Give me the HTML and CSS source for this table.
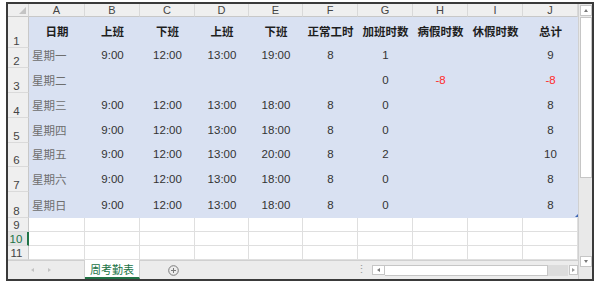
FILE: index.html
```html
<!DOCTYPE html>
<html lang="zh">
<head>
<meta charset="utf-8">
<link rel="stylesheet" href="styles.css">
</head>
<body>
<div class="window">
  <div class="left">
    <div class="sheet">
      <div class="corner"><span class="tri"></span></div>
      <div class="ch">A</div><div class="ch">B</div><div class="ch">C</div><div class="ch">D</div><div class="ch">E</div><div class="ch">F</div><div class="ch">G</div><div class="ch">H</div><div class="ch">I</div><div class="ch">J</div>

      <div class="rh">1</div>
      <div class="c hd">日期</div><div class="c hd">上班</div><div class="c hd">下班</div><div class="c hd">上班</div><div class="c hd">下班</div><div class="c hd">正常工时</div><div class="c hd">加班时数</div><div class="c hd">病假时数</div><div class="c hd">休假时数</div><div class="c hd">总计</div>

      <div class="rh">2</div>
      <div class="c day">星期一</div><div class="c">9:00</div><div class="c">12:00</div><div class="c">13:00</div><div class="c">19:00</div><div class="c">8</div><div class="c">1</div><div class="c"></div><div class="c"></div><div class="c">9</div>

      <div class="rh">3</div>
      <div class="c day">星期二</div><div class="c"></div><div class="c"></div><div class="c"></div><div class="c"></div><div class="c"></div><div class="c">0</div><div class="c red">-8</div><div class="c"></div><div class="c red">-8</div>

      <div class="rh">4</div>
      <div class="c day">星期三</div><div class="c">9:00</div><div class="c">12:00</div><div class="c">13:00</div><div class="c">18:00</div><div class="c">8</div><div class="c">0</div><div class="c"></div><div class="c"></div><div class="c">8</div>

      <div class="rh">5</div>
      <div class="c day">星期四</div><div class="c">9:00</div><div class="c">12:00</div><div class="c">13:00</div><div class="c">18:00</div><div class="c">8</div><div class="c">0</div><div class="c"></div><div class="c"></div><div class="c">8</div>

      <div class="rh">6</div>
      <div class="c day">星期五</div><div class="c">9:00</div><div class="c">12:00</div><div class="c">13:00</div><div class="c">20:00</div><div class="c">8</div><div class="c">2</div><div class="c"></div><div class="c"></div><div class="c">10</div>

      <div class="rh">7</div>
      <div class="c day">星期六</div><div class="c">9:00</div><div class="c">12:00</div><div class="c">13:00</div><div class="c">18:00</div><div class="c">8</div><div class="c">0</div><div class="c"></div><div class="c"></div><div class="c">8</div>

      <div class="rh">8</div>
      <div class="c day">星期日</div><div class="c">9:00</div><div class="c">12:00</div><div class="c">13:00</div><div class="c">18:00</div><div class="c">8</div><div class="c">0</div><div class="c"></div><div class="c"></div><div class="c last">8<span class="handle"></span></div>

      <div class="rh">9</div>
      <div class="w"></div><div class="w"></div><div class="w"></div><div class="w"></div><div class="w"></div><div class="w"></div><div class="w"></div><div class="w"></div><div class="w"></div><div class="w"></div>

      <div class="rh active">10</div>
      <div class="w"></div><div class="w"></div><div class="w"></div><div class="w"></div><div class="w"></div><div class="w"></div><div class="w"></div><div class="w"></div><div class="w"></div><div class="w"></div>

      <div class="rh">11</div>
      <div class="w"></div><div class="w"></div><div class="w"></div><div class="w"></div><div class="w"></div><div class="w"></div><div class="w"></div><div class="w"></div><div class="w"></div><div class="w"></div>
    </div>
    <div class="tabbar">
      <div class="nav"><span class="navl"></span><span class="navr"></span></div>
      <div class="tab">周考勤表</div>
      <div class="addwrap">
        <svg class="add" width="11" height="11" viewBox="0 0 11 11"><circle cx="5.5" cy="5.5" r="4.8" fill="none" stroke="#7a7a7a" stroke-width="1"/><path d="M5.5 3v5M3 5.5h5" stroke="#7a7a7a" stroke-width="1"/></svg>
      </div>
      <div class="spacer"></div>
      <div class="dots">⋮</div>
      <div class="hscroll">
        <div class="hbtn hl"><span class="al"></span></div>
        <div class="htrack"></div>
        <div class="hgap"></div>
        <div class="hbtn hr"><span class="ar"></span></div>
      </div>
    </div>
  </div>
  <div class="vscroll">
    <div class="vbtn"><span class="au"></span></div>
    <div class="thumb"></div>
    <div class="vspace"></div>
    <div class="vbtn"><span class="ad"></span></div>
    <div class="vcorner"></div>
  </div>
</div>
</body>
</html>
```
FILE: styles.css
```css
html, body {
  margin: 0;
  padding: 0;
  background: #ffffff;
}
body {
  font-family: "Liberation Sans", "Noto Sans CJK SC", sans-serif;
}
.window {
  margin: 2px 0 0 6px;
  width: 588px;
  height: 279px;
  box-sizing: border-box;
  border: 2px solid #3a3a3a;
  display: flex;
  background: #fff;
}
.left {
  width: 570px;
  display: flex;
  flex-direction: column;
}
.sheet {
  display: grid;
  grid-template-columns: 21px 56px 55px 55px 54px 54px 55px 55px 55px 55px 55px;
  grid-template-rows: 13px 31px 20px 25px 25px 25px 24px 25px 26px 14px 14px 14px;
  height: 256px;
}
.corner {
  background: #efefef;
  border-right: 1px solid #d2d2d2;
  border-bottom: 1px solid #c8c8c8;
  box-sizing: border-box;
  position: relative;
}
.tri {
  position: absolute;
  right: 2px;
  bottom: 2px;
  width: 0;
  height: 0;
  border-left: 7px solid transparent;
  border-bottom: 7px solid #c4c4c4;
}
.ch {
  background: #efefef;
  border-right: 1px solid #d9d9d9;
  border-bottom: 1px solid #c8c8c8;
  box-sizing: border-box;
  font-size: 11px;
  line-height: 12px;
  color: #444;
  text-align: center;
}
.rh {
  background: #efefef;
  border-right: 1px solid #c8c8c8;
  border-bottom: 1px solid #dadada;
  box-sizing: border-box;
  font-size: 11.5px;
  line-height: 12px;
  color: #444;
  display: flex;
  align-items: flex-end;
  justify-content: center;
  padding-right: 3px;
}
.rh.active {
  color: #217346;
  border-right: 2px solid #217346;
  background: #e4e4e4;
}
.c {
  background: #d9e1f2;
  display: flex;
  align-items: flex-end;
  justify-content: center;
  font-size: 11.5px;
  line-height: 14px;
  padding-bottom: 6px;
  box-sizing: border-box;
  color: #333;
  white-space: nowrap;
}
.c.hd {
  font-family: "Noto Sans CJK SC", sans-serif;
  font-weight: bold;
  color: #1e1e1e;
  padding-bottom: 10px;
  font-size: 11.5px;
}
.c.day {
  justify-content: flex-start;
  padding-left: 3px;
  color: #6e6e6e;
  font-family: "Noto Sans CJK SC", sans-serif;
}
.c.red {
  color: #ff2a2a;
}
.c.last {
  position: relative;
}
.handle {
  position: absolute;
  right: 0;
  bottom: 1px;
  width: 0;
  height: 0;
  border-left: 3px solid transparent;
  border-bottom: 3px solid #3e66b3;
}
.w {
  background: #fff;
  border-right: 1px solid #dfdfdf;
  border-bottom: 1px solid #dfdfdf;
  box-sizing: border-box;
}
.tabbar {
  height: 19px;
  background: #ececec;
  border-top: 1px solid #d0d0d0;
  box-sizing: border-box;
  display: flex;
  align-items: stretch;
}
.nav {
  width: 77px;
  display: flex;
  align-items: center;
  gap: 14px;
  padding-left: 23px;
  box-sizing: border-box;
  border-right: 1px solid #d0d0d0;
}
.navl {
  width: 0;
  height: 0;
  border-top: 2.5px solid transparent;
  border-bottom: 2.5px solid transparent;
  border-right: 3px solid #c2c2c2;
}
.navr {
  width: 0;
  height: 0;
  border-top: 2.5px solid transparent;
  border-bottom: 2.5px solid transparent;
  border-left: 3px solid #c2c2c2;
}
.tab {
  width: 55px;
  margin-top: -1px;
  background: #fff;
  color: #217346;
  font-family: "Noto Sans CJK SC", sans-serif;
  font-size: 11px;
  line-height: 16px;
  text-align: center;
  border-bottom: 2px solid #217346;
  border-right: 1px solid #d0d0d0;
  box-sizing: border-box;
  padding-top: 1px;
}
.addwrap {
  width: 66px;
  display: flex;
  align-items: center;
  justify-content: center;
}
.spacer {
  flex: 1;
}
.dots {
  width: 12px;
  color: #9a9a9a;
  font-size: 11px;
  line-height: 17px;
  text-align: center;
  margin-right: 5px;
}
.hscroll {
  width: 206px;
  display: flex;
  align-items: center;
  padding-top: 0;
}
.hbtn {
  height: 10px;
  background: #fff;
  border: 1px solid #c6c6c6;
  box-sizing: border-box;
  display: flex;
  align-items: center;
  justify-content: center;
}
.hl { width: 13px; }
.hr { width: 9px; margin-left: 1px; }
.al {
  width: 0; height: 0;
  border-top: 2.5px solid transparent;
  border-bottom: 2.5px solid transparent;
  border-right: 3px solid #7a7a7a;
}
.ar {
  width: 0; height: 0;
  border-top: 2.5px solid transparent;
  border-bottom: 2.5px solid transparent;
  border-left: 3px solid #9a9a9a;
}
.htrack {
  width: 163px;
  height: 11px;
  background: #fff;
  border: 1px solid #c6c6c6;
  border-left: none;
  box-sizing: border-box;
}
.hgap {
  flex: 1;
  height: 11px;
  background: #dcdcdc;
}
.vscroll {
  width: 14px;
  background: #e9e9e9;
  display: flex;
  flex-direction: column;
  align-items: flex-end;
  box-sizing: border-box;
  border-left: 1px solid #d0d0d0;
}
.vbtn {
  width: 12px;
  height: 11px;
  margin-top: 1px;
  background: #fff;
  border: 1px solid #c6c6c6;
  box-sizing: border-box;
  display: flex;
  align-items: center;
  justify-content: center;
}
.au {
  width: 0; height: 0;
  border-left: 2.5px solid transparent;
  border-right: 2.5px solid transparent;
  border-bottom: 3px solid #7a7a7a;
}
.ad {
  width: 0; height: 0;
  border-left: 2.5px solid transparent;
  border-right: 2.5px solid transparent;
  border-top: 3px solid #7a7a7a;
}
.thumb {
  width: 12px;
  height: 161px;
  margin-top: 1px;
  background: #fff;
  border: 1px solid #c6c6c6;
  box-sizing: border-box;
}
.vspace {
  flex: 1;
}
.vcorner {
  height: 12px;
}
```
